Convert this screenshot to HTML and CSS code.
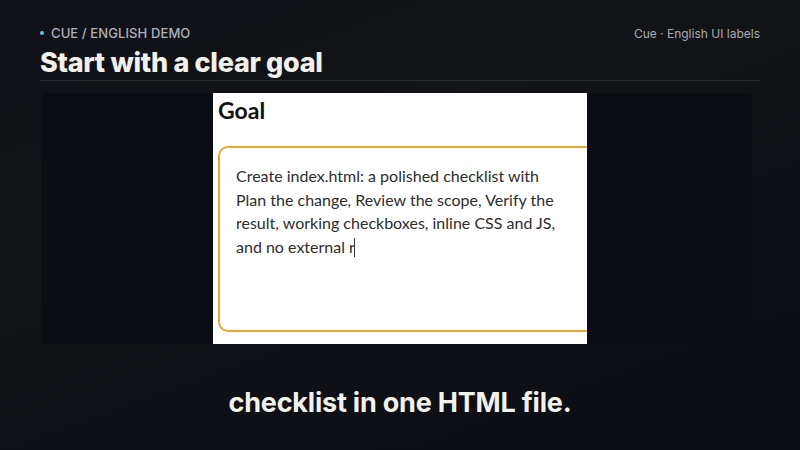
FILE: index.html
```html
<!DOCTYPE html>
<html>
<head>
<meta charset="utf-8">
<link rel="stylesheet" href="styles.css">
</head>
<body>
<div class="page">
  <header class="top">
    <div class="toprow">
      <div class="kicker"><span class="dot"></span>CUE / ENGLISH DEMO</div>
      <div class="meta">Cue · English UI labels</div>
    </div>
    <h1 class="title">Start with a clear goal</h1>
    <div class="rule"></div>
  </header>
  <main class="stage">
    <div class="panel">
      <div class="card">
        <h2 class="goal">Goal</h2>
        <div class="field">
          <div class="fieldtext">Create index.html: a polished checklist with<br>Plan the change, Review the scope, Verify the<br>result, working checkboxes, inline CSS and JS,<br>and no external r<span class="caret"></span></div>
        </div>
      </div>
    </div>
  </main>
  <div class="caption">checklist in one HTML file.</div>
</div>
</body>
</html>
```
FILE: styles.css
```css
* { box-sizing: border-box; }
html, body { margin: 0; padding: 0; }
body {
  width: 800px;
  height: 450px;
  overflow: hidden;
  background: linear-gradient(160deg, #101117 0%, #131417 35%, #0e1016 70%, #0c0e15 100%);
  font-family: Inter, "Liberation Sans", sans-serif;
}
.page { width: 800px; height: 450px; display: flex; flex-direction: column; }
.top { padding: 26px 40px 0 40px; }
.toprow { display: flex; justify-content: space-between; align-items: center; height: 14px; }
.kicker {
  display: flex; align-items: center;
  font-size: 13px; font-weight: 500; color: #aeb2bf; letter-spacing: 0.1px;
}
.dot { width: 4px; height: 4px; border-radius: 50%; background: #6cc3e6; margin-right: 7px; }
.meta { font-size: 12px; color: #a9abb2; }
.title {
  margin: 7px 0 0 0;
  font-size: 27px; font-weight: 800; color: #f1f0ea; letter-spacing: -0.3px;
  line-height: 32px;
}
.rule { height: 1px; background: #26282e; margin-top: 1px; }
.stage { display: flex; padding: 12px 48px 0 41px; }
.panel {
  width: 711px; height: 251px;
  background: #0b0d14;
  border-radius: 6px;
  display: flex; justify-content: flex-start;
  padding-left: 172px;
}
.card {
  width: 374px; height: 251px;
  background: #ffffff;
  overflow: hidden;
  padding: 5px 0 0 5px;
  font-family: Lato, "Noto Sans", sans-serif;
}
.goal {
  margin: 0; font-size: 23px; font-weight: 700; color: #111;
  line-height: 24px; height: 48px;
}
.field {
  width: 380px; height: 186px;
  border: 2px solid #e5a733;
  border-radius: 10px;
  padding: 16px 16px 0 16px;
}
.fieldtext {
  font-size: 16px; line-height: 23.5px; color: #2d2d2d;
  white-space: nowrap;
}
.caret {
  display: inline-block; width: 0; height: 19px;
  border-left: 1px solid #333; vertical-align: -4px; margin-left: -1px;
}
.caption {
  margin-top: 42px;
  text-align: center;
  font-size: 27px; font-weight: 700; color: #f2f1ea; letter-spacing: -0.2px;
}
```
